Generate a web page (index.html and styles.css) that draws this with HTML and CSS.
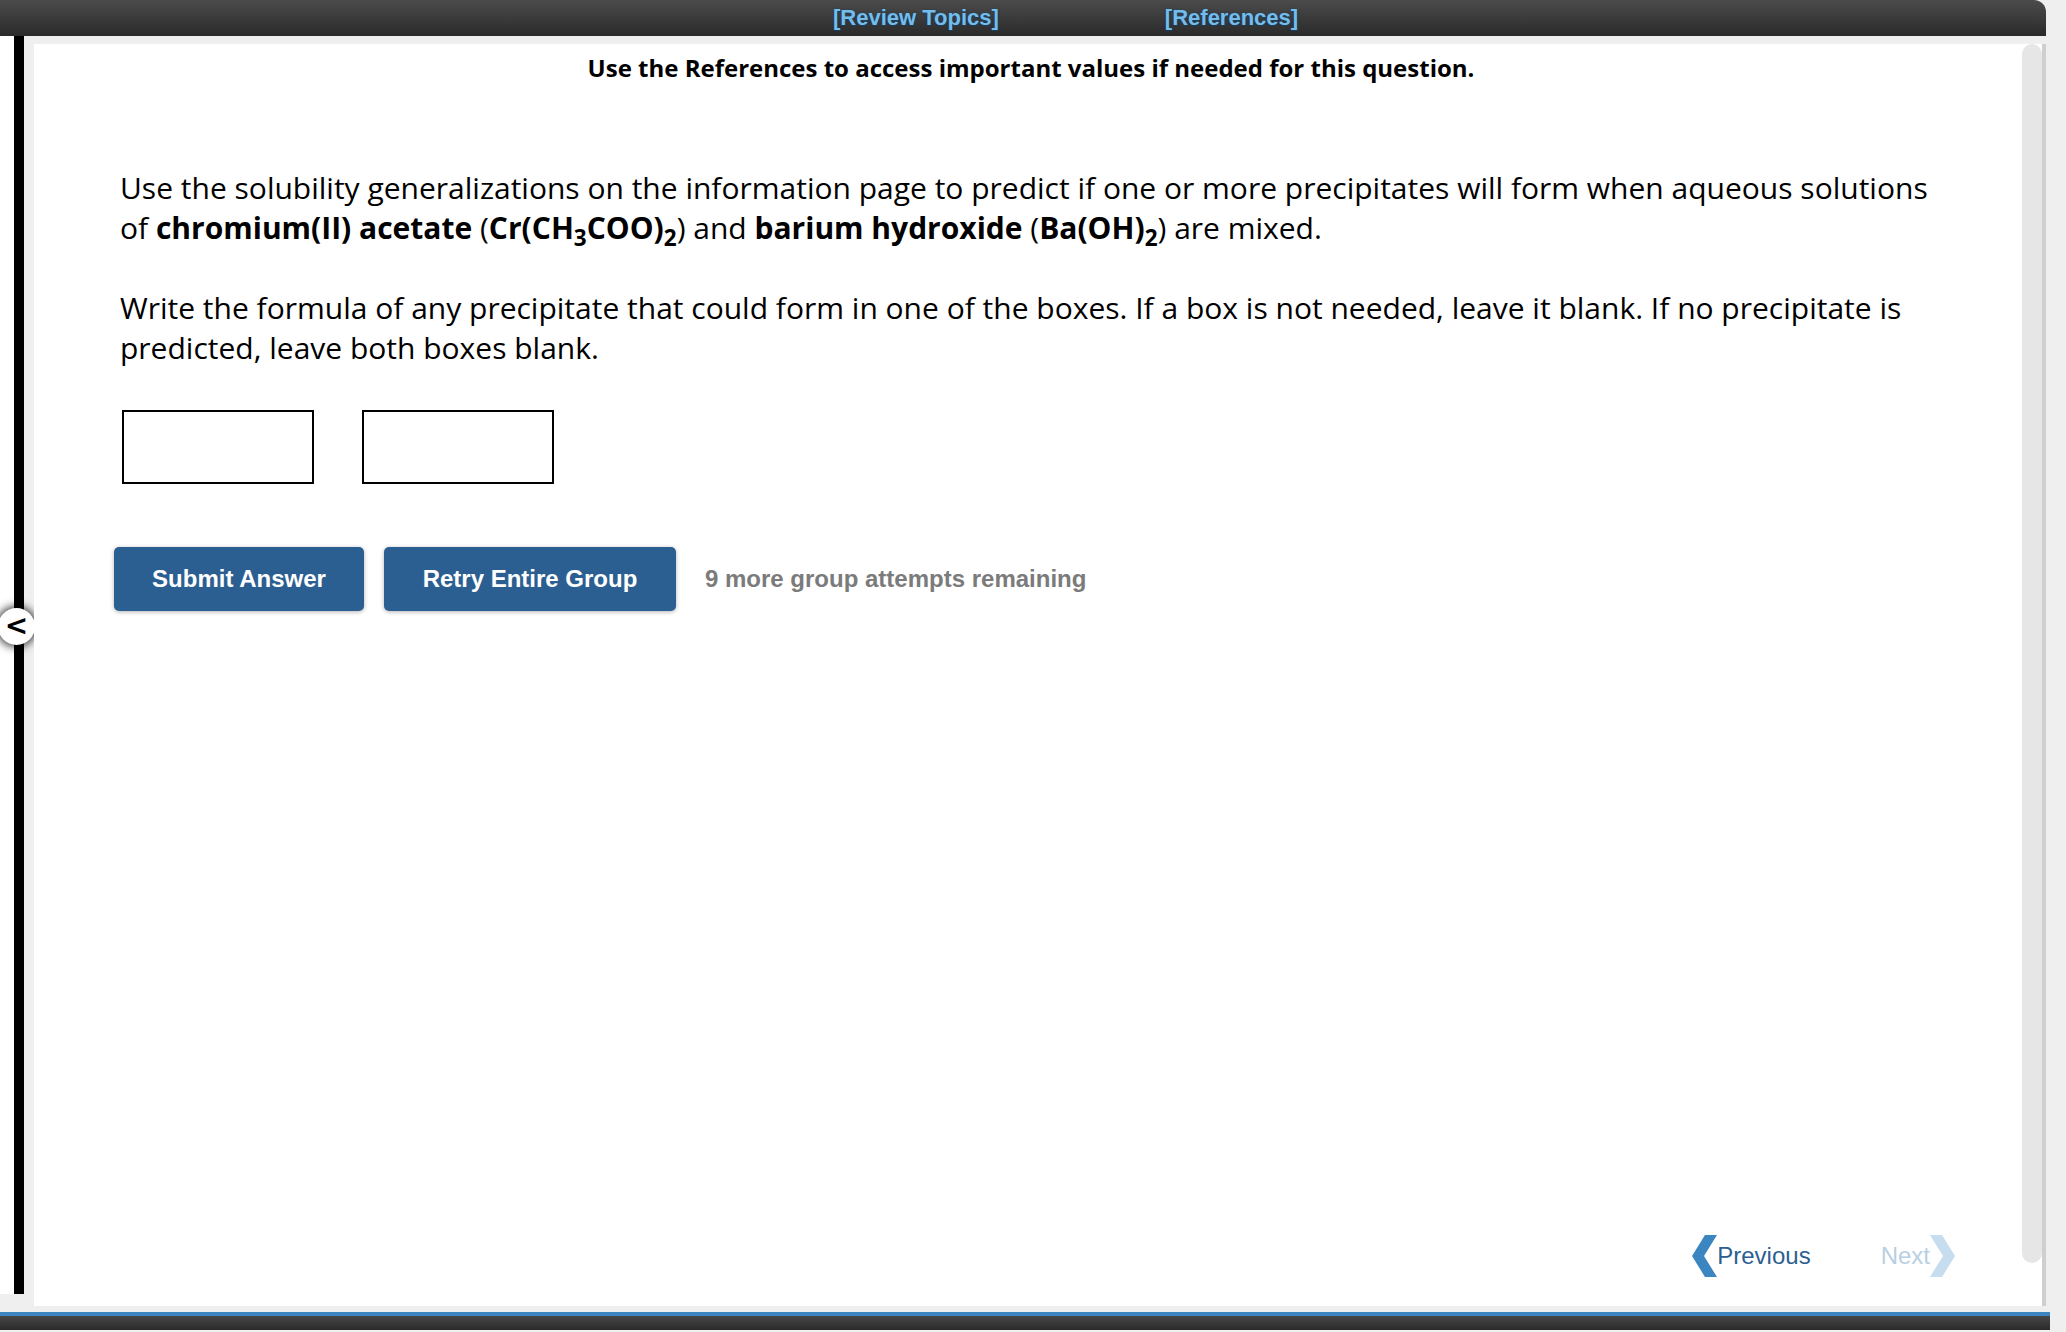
FILE: index.html
```html
<!DOCTYPE html>
<html lang="en">
    <head>
        <meta charset="utf-8">
        <link rel="stylesheet" href="styles.css">
    </head>
    <body>
        <div class="topbar">
            <a class="toplink first" href="#">[Review Topics]</a>
            <a class="toplink" href="#">[References]</a>
        </div>
        <div class="main">
            <div class="side"></div>
            <span class="toggle">&lt;</span>
            <div class="panel">
                <p class="note">Use the References to access important values if needed for this question.</p>
                <div class="question">
                    <p>Use the solubility generalizations on the information page to predict if one or more precipitates will form when aqueous solutions of <b>chromium(II) acetate</b> (<b>Cr(CH<sub>3</sub>COO)<sub>2</sub></b>) and <b>barium hydroxide</b> (<b>Ba(OH)<sub>2</sub></b>) are mixed.</p>
                    <p>Write the formula of any precipitate that could form in one of the boxes. If a box is not needed, leave it blank. If no precipitate is predicted, leave both boxes blank.</p>
                </div>
                <div class="boxes">
                    <input class="box" type="text">
                    <input class="box" type="text">
                </div>
                <div class="actions">
                    <button class="btn">Submit Answer</button>
                    <button class="btn retry">Retry Entire Group</button>
                    <span class="attempts">9 more group attempts remaining</span>
                </div>
                <div class="nav">
                    <a class="prev" href="#">
                        <svg width="25" height="42" viewBox="0 0 25 42"><polygon points="25,0 13,0 0,21 13,42 25,42 12,21" fill="#3b86c1"/></svg>
                        Previous
                    </a>
                    <a class="next" href="#">
                        Next
                        <svg width="25" height="42" viewBox="0 0 25 42"><polygon points="0,0 12,0 25,21 12,42 0,42 13,21" fill="#c6ddef"/></svg>
                    </a>
                </div>
                <div class="thumb"></div>
            </div>
        </div>
        <div class="footer"></div>
    </body>
</html>
```

FILE: styles.css
```css
*{
    margin: 0;
    padding: 0;
    box-sizing: border-box;
}
body{
    background: #efefef;
    font-family: "Open Sans", "Liberation Sans", sans-serif;
    color: #000;
    width: 2066px;
    height: 1332px;
    overflow: hidden;
}
.topbar{
    width: 2046px;
    height: 36px;
    background: linear-gradient(#4b4b4b, #2a2a2a);
    border-top-right-radius: 12px;
    display: flex;
    align-items: center;
    padding-left: 833px;
}
.toplink{
    font-family: "Liberation Sans", Arial, sans-serif;
    font-weight: bold;
    font-size: 22px;
    color: #74bdea;
    text-decoration: none;
    text-shadow: 0 0 2px #1c3f5e, 1px 1px 1px #1c3f5e;
}
.toplink.first{
    margin-right: 166px;
}
.main{
    display: flex;
    height: 1270px;
    position: relative;
}
.side{
    width: 24px;
    height: 1258px;
    background: #fff;
    border-right: 10px solid #000;
}
.toggle{
    position: absolute;
    left: -2px;
    top: 572px;
    width: 37px;
    height: 37px;
    border-radius: 50%;
    background: #fff;
    box-shadow: 0 0 8px 2px rgba(0,0,0,.75);
    font-family: "DejaVu Sans", sans-serif;
    font-weight: bold;
    font-size: 28px;
    line-height: 35px;
    text-align: center;
}
.panel{
    position: relative;
    margin: 8px 0 0 10px;
    width: 2012px;
    height: 1262px;
    background: #fff;
    border-right: 4px solid #cfcfcf;
    display: flex;
    flex-direction: column;
    padding: 0 90px 0 86px;
}
.note{
    font-weight: bold;
    font-size: 24px;
    line-height: 33px;
    text-align: center;
    margin: 7px 0 0 -10px;
}
.question{
    margin-top: 84px;
    font-size: 30px;
    line-height: 40px;
}
.question p + p{
    margin-top: 40px;
}
sub{
    font-size: 75%;
    line-height: 0;
    vertical-align: -0.3em;
}
.boxes{
    display: flex;
    gap: 48px;
    margin: 42px 0 0 2px;
}
.box{
    width: 192px;
    height: 74px;
    border: 2px solid #000;
    background: #fff;
}
.actions{
    display: flex;
    align-items: center;
    margin: 63px 0 0 -6px;
    font-family: "Liberation Sans", Arial, sans-serif;
    font-weight: bold;
    font-size: 24px;
}
.btn{
    height: 64px;
    width: 250px;
    background: #2c5f91;
    color: #fff;
    border: none;
    border-radius: 5px;
    box-shadow: 0 1px 4px rgba(0,0,0,.3);
    font: inherit;
    margin-right: 20px;
}
.btn.retry{
    width: 292px;
    margin-right: 29px;
}
.attempts{
    color: #7b7b7b;
}
.nav{
    margin-top: auto;
    margin-bottom: 29px;
    margin-right: -3px;
    display: flex;
    justify-content: flex-end;
    align-items: center;
    gap: 70px;
    font-family: "Liberation Sans", Arial, sans-serif;
    font-size: 24px;
}
.nav a{
    display: flex;
    align-items: center;
    text-decoration: none;
}
.prev{
    color: #2c5f91;
}
.next{
    color: #b9cfe3;
}
.thumb{
    position: absolute;
    right: 0;
    top: 0;
    width: 20px;
    height: 1219px;
    border-radius: 10px;
    background: #e6e6e6;
}
.footer{
    width: 2050px;
    height: 18px;
    margin-top: 6px;
    border-top: 4px solid #3d85c0;
    background: linear-gradient(#474747, #2a2a2a);
}
```
